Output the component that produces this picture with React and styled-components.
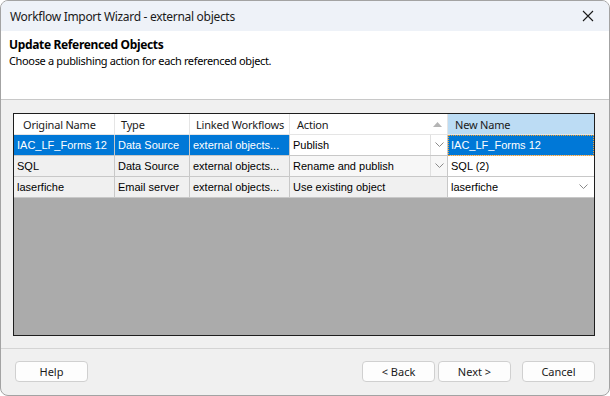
import React from 'react';
import styled, { createGlobalStyle } from 'styled-components';

const GlobalStyle = createGlobalStyle`
  body {
    margin: 0;
    background: #ffffff;
  }
  * {
    box-sizing: border-box;
  }
`;

const columns = [
  { label: 'Original Name', width: 101, pad: 9 },
  { label: 'Type', width: 75, pad: 6 },
  { label: 'Linked Workflows', width: 100, pad: 6 },
  { label: 'Action', width: 158, pad: 7, sorted: true },
  { label: 'New Name', width: 146, pad: 7, active: true }
];

const rows = [
  { name: 'IAC_LF_Forms 12', type: 'Data Source', linked: 'external objects...', action: 'Publish', newName: 'IAC_LF_Forms 12', selected: true, actionDrop: true, actionBg: '#ffffff' },
  { name: 'SQL', type: 'Data Source', linked: 'external objects...', action: 'Rename and publish', newName: 'SQL (2)', actionDrop: true, actionBg: '#f7f7f7' },
  { name: 'laserfiche', type: 'Email server', linked: 'external objects...', action: 'Use existing object', newName: 'laserfiche', nameDrop: true, actionBg: '#f0f0f0' }
];

const Chevron = () => (
  <svg width="9" height="6" viewBox="0 0 9 6">
    <path d="M0.5 0.5 L4.5 4.5 L8.5 0.5" fill="none" stroke="#8a8a8a" strokeWidth="1" />
  </svg>
);

const SortArrow = () => (
  <svg width="9" height="5" viewBox="0 0 9 5">
    <path d="M0 5 L4.5 0 L9 5 Z" fill="#b4b4b4" />
  </svg>
);

const App = () => (
  <>
    <GlobalStyle />
    <Window>
      <TitleBar>
        <Title>Workflow Import Wizard - external objects</Title>
        <Close>
          <svg width="12" height="12" viewBox="0 0 12 12">
            <path d="M1 1 L11 11 M11 1 L1 11" stroke="#1a1a1a" strokeWidth="1.1" />
          </svg>
        </Close>
      </TitleBar>

      <Header>
        <Heading>Update Referenced Objects</Heading>
        <Subheading>Choose a publishing action for each referenced object.</Subheading>
      </Header>

      <Body>
        <Grid>
          <Row>
            {columns.map((c) => (
              <HeadCell key={c.label} $w={c.width} $pad={c.pad} $active={c.active}>
                <span>{c.label}</span>
                {c.sorted && <SortArrow />}
              </HeadCell>
            ))}
          </Row>

          {rows.map((r) => (
            <Row key={r.name}>
              <Cell $w={101} $selected={r.selected}>{r.name}</Cell>
              <Cell $w={75} $selected={r.selected}>{r.type}</Cell>
              <Cell $w={100} $selected={r.selected}>{r.linked}</Cell>
              <Cell $w={158} $bg={r.actionBg}>
                <CellText>{r.action}</CellText>
                {r.actionDrop && <DropButton><Chevron /></DropButton>}
              </Cell>
              <Cell $w={146} $bg="#ffffff" $selected={r.selected} $focus={r.selected}>
                <CellText>{r.newName}</CellText>
                {r.nameDrop && <DropButton $plain><Chevron /></DropButton>}
              </Cell>
            </Row>
          ))}

          <Filler />
        </Grid>
      </Body>

      <Footer>
        <Button>Help</Button>
        <Spacer />
        <Button>&lt; Back</Button>
        <Button>Next &gt;</Button>
        <Button $gapLeft>Cancel</Button>
      </Footer>
    </Window>
  </>
);

const Window = styled.div`
  width: 610px;
  height: 396px;
  display: flex;
  flex-direction: column;
  border: 1px solid #a3a3a3;
  border-radius: 8px;
  overflow: hidden;
  background: #f0f0f0;
  font-family: "Noto Sans", "Open Sans", sans-serif;
  font-size: 12px;
  color: #000;
`;

const TitleBar = styled.div`
  height: 30px;
  flex: none;
  display: flex;
  align-items: center;
  padding: 0 0 0 9px;
  background: #eef2f8;
`;

const Title = styled.div`
  flex: 1;
  font-size: 12px;
  color: #1a1a1a;
  letter-spacing: -0.3px;
`;

const Close = styled.div`
  width: 46px;
  height: 30px;
  display: flex;
  align-items: center;
  justify-content: center;
  margin-right: -2px;
`;

const Header = styled.div`
  height: 69px;
  flex: none;
  background: #ffffff;
  border-bottom: 1px solid #c8c8c8;
  padding: 5px 8px 0;
`;

const Heading = styled.div`
  font-weight: bold;
  font-size: 12px;
  line-height: 17px;
  letter-spacing: -0.35px;
`;

const Subheading = styled.div`
  font-size: 11px;
  line-height: 15px;
  letter-spacing: -0.35px;
`;

const Body = styled.div`
  flex: none;
  height: 249px;
  padding: 13px 14px 12px 12px;
  border-bottom: 1px solid #d4d4d4;
  display: flex;
`;

const Grid = styled.div`
  flex: 1;
  display: flex;
  flex-direction: column;
  border: 1px solid #1e1e1e;
  background: #ababab;
  font-family: "Liberation Sans", Arial, sans-serif;
  font-size: 11px;
`;

const Row = styled.div`
  display: flex;
  height: 21px;
  flex: none;
`;

const HeadCell = styled.div`
  width: ${(p) => p.$w}px;
  flex: none;
  display: flex;
  align-items: center;
  justify-content: space-between;
  padding: 0 5px 0 ${(p) => p.$pad}px;
  white-space: nowrap;
  background: ${(p) => (p.$active ? '#bcdcf4' : '#ffffff')};
  border-right: 1px solid #e5e5e5;
  border-bottom: 1px solid #e5e5e5;
  font-family: "Noto Sans", "Open Sans", sans-serif;
  font-size: 11px;
  letter-spacing: -0.2px;
  color: #1a1a1a;
  &:last-child {
    border-right: none;
  }
`;

const Cell = styled.div`
  width: ${(p) => p.$w}px;
  flex: none;
  display: flex;
  align-items: center;
  padding: 0 0 0 3px;
  white-space: nowrap;
  overflow: hidden;
  background: ${(p) => (p.$selected ? '#0078d7' : p.$bg || '#f0f0f0')};
  color: ${(p) => (p.$selected ? '#ffffff' : '#000000')};
  border-right: 1px solid #c8c8c8;
  border-bottom: 1px solid #c8c8c8;
  outline: ${(p) => (p.$focus ? '1px dotted #f0a030' : 'none')};
  outline-offset: -1px;
  &:last-child {
    border-right: none;
  }
`;

const CellText = styled.span`
  flex: 1;
`;

const DropButton = styled.div`
  width: 17px;
  height: 100%;
  flex: none;
  display: flex;
  align-items: center;
  justify-content: center;
  border-left: ${(p) => (p.$plain ? 'none' : '1px solid #e0e0e0')};
  margin-right: ${(p) => (p.$plain ? '2px' : '0')};
`;

const Filler = styled.div`
  flex: 1;
`;

const Footer = styled.div`
  flex: 1;
  display: flex;
  align-items: flex-start;
  padding: 12px 14px 0 14px;
  gap: 3px;
`;

const Spacer = styled.div`
  flex: 1;
`;

const Button = styled.button`
  width: 73px;
  height: 21px;
  margin-left: ${(p) => (p.$gapLeft ? '8px' : '0')};
  border: 1px solid #d0d0d0;
  border-radius: 4px;
  background: #fdfdfd;
  font-family: "Noto Sans", "Open Sans", sans-serif;
  font-size: 11px;
  color: #1a1a1a;
  padding: 0;
`;

export default App;
